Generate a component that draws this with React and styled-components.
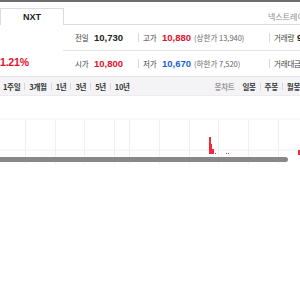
import React from "react";
import styled, { createGlobalStyle } from "styled-components";

const Global = createGlobalStyle`
  html, body { margin: 0; padding: 0; background: #fff; }
  body { font-family: "Noto Sans CJK KR", "Noto Sans", "Liberation Sans", sans-serif; }
`;

const Page = styled.div`
  width: 300px;
  height: 300px;
  overflow: hidden;
  background: #fff;
`;

const TopLine = styled.div`
  height: 2px;
  background: #6d6d6d;
`;

const TabRow = styled.div`
  margin-top: 6px;
  height: 17px;
  display: flex;
  align-items: stretch;
`;

const Tab = styled.div`
  width: 62px;
  flex-shrink: 0;
  border: 1px solid #dcdcdc;
  border-bottom: none;
  display: flex;
  align-items: center;
  justify-content: center;
  font-family: "Liberation Sans", sans-serif;
  font-size: 9px;
  font-weight: 700;
  color: #222;
`;

const TabRest = styled.div`
  flex: 1;
  border-bottom: 1px solid #dcdcdc;
  display: flex;
  align-items: center;
  padding-left: 204px;
  overflow: hidden;
`;

const Exchange = styled.span`
  font-size: 8px;
  color: #888;
  white-space: nowrap;
`;

const Info = styled.div`
  display: flex;
  height: 51px;
`;

const Change = styled.div`
  width: 63px;
  flex-shrink: 0;
  display: flex;
  align-items: flex-end;
  padding-bottom: 8px;
  box-sizing: border-box;
  font-family: "Liberation Sans", sans-serif;
  font-size: 10.5px;
  font-weight: 700;
  color: #e0102b;
  letter-spacing: -0.2px;
`;

const Rows = styled.div`
  flex: 1;
  min-width: 0;
  overflow: hidden;
  display: flex;
  flex-direction: column;
`;

const Row = styled.div`
  height: 25px;
  display: flex;
  align-items: center;
  white-space: nowrap;
  border-bottom: ${(p) => (p.$line ? "1px solid #e4e4e4" : "none")};
`;

const Cell = styled.div`
  width: ${(p) => p.$w}px;
  flex-shrink: 0;
  display: flex;
  align-items: center;
  padding-left: ${(p) => (p.$first ? 12 : 4)}px;
  box-sizing: border-box;
  border-left: ${(p) => (p.$first ? "none" : "1px solid #d8d8d8")};
  height: 9px;
`;

const Label = styled.span`
  font-size: 7.5px;
  color: #444;
  letter-spacing: -0.2px;
  width: ${(p) => p.$w || 19}px;
  flex-shrink: 0;
`;

const Value = styled.span`
  font-family: "Liberation Sans", sans-serif;
  font-size: 9.5px;
  font-weight: 700;
  color: ${(p) => p.$c || "#222"};
`;

const Limit = styled.span`
  font-size: 7.5px;
  color: #666;
  margin-left: 3px;
`;

const Toolbar = styled.div`
  height: 18px;
  background: #f4f4f6;
  border-top: 1px solid #e2e2e4;
  border-bottom: 1px solid #ececee;
  display: flex;
  align-items: center;
  justify-content: space-between;
  padding-left: 3px;
  white-space: nowrap;
`;

const Group = styled.div`
  display: flex;
  align-items: center;
`;

const Item = styled.span`
  font-size: 7.5px;
  font-weight: 700;
  color: ${(p) => (p.$muted ? "#999" : "#333")};
  letter-spacing: -0.3px;
  display: flex;
  align-items: center;
  &::after {
    content: "";
    display: ${(p) => (p.$sep ? "block" : "none")};
    width: 1px;
    height: 7px;
    background: #d6d6d6;
    margin: 0 4px;
  }
  margin-right: ${(p) => (p.$gap ? 8 : 0)}px;
`;

const Chart = styled.div`
  margin-top: 22px;
  position: relative;
  height: 46px;
`;

const Scroll = styled.div`
  position: absolute;
  left: 0;
  top: 39px;
  width: 288px;
  height: 5px;
  border-radius: 0 3px 3px 0;
  background: #888;
`;

const gridX = [25, 55, 84, 114, 129, 159, 189, 218, 248, 278];

const App = () => {
  return (
    <Page>
      <Global />
      <TopLine />
      <TabRow>
        <Tab>NXT</Tab>
        <TabRest>
          <Exchange>넥스트레이드</Exchange>
        </TabRest>
      </TabRow>
      <Info>
        <Change>1.21%</Change>
        <Rows>
          <Row $line>
            <Cell $first $w={75}>
              <Label>전일</Label>
              <Value>10,730</Value>
            </Cell>
            <Cell $w={131}>
              <Label>고가</Label>
              <Value $c="#e0102b">10,880</Value>
              <Limit>(상한가 13,940)</Limit>
            </Cell>
            <Cell $w={60}>
              <Label $w={23}>거래량</Label>
              <Value>9,</Value>
            </Cell>
          </Row>
          <Row>
            <Cell $first $w={75}>
              <Label>시가</Label>
              <Value $c="#e0102b">10,800</Value>
            </Cell>
            <Cell $w={131}>
              <Label>저가</Label>
              <Value $c="#1a5fd6">10,670</Value>
              <Limit>(하한가 7,520)</Limit>
            </Cell>
            <Cell $w={60}>
              <Label $w={32}>거래대금</Label>
            </Cell>
          </Row>
        </Rows>
      </Info>
      <Toolbar>
        <Group>
          <Item $sep>1주일</Item>
          <Item $sep>3개월</Item>
          <Item $sep>1년</Item>
          <Item $sep>3년</Item>
          <Item $sep>5년</Item>
          <Item>10년</Item>
        </Group>
        <Group>
          <Item $muted $gap>봉차트</Item>
          <Item $sep>일봉</Item>
          <Item $sep>주봉</Item>
          <Item>월봉</Item>
        </Group>
      </Toolbar>
      <Chart>
        <svg width="300" height="46" viewBox="0 0 300 46">
          <line x1="0" y1="1" x2="300" y2="1" stroke="#f0f0f0" />
          <line x1="0" y1="32" x2="300" y2="32" stroke="#f0f0f0" />
          {gridX.map((x) => (
            <line key={x} x1={x + 0.5} y1="1" x2={x + 0.5} y2="46" stroke="#f0f0f0" />
          ))}
          <rect x="209" y="19" width="2" height="17" fill="#f0283c" />
          <rect x="211" y="26" width="1" height="10" fill="#f0283c" />
          <rect x="212" y="31" width="2" height="5" fill="#f0283c" />
          <rect x="215" y="35" width="1" height="1" fill="#f0283c" />
          <rect x="226" y="35" width="1" height="1" fill="#f0283c" />
          <rect x="228" y="35" width="1" height="1" fill="#f0283c" />
          <rect x="298" y="32" width="2" height="5" fill="#f0283c" />
        </svg>
        <Scroll />
      </Chart>
    </Page>
  );
};

export default App;
